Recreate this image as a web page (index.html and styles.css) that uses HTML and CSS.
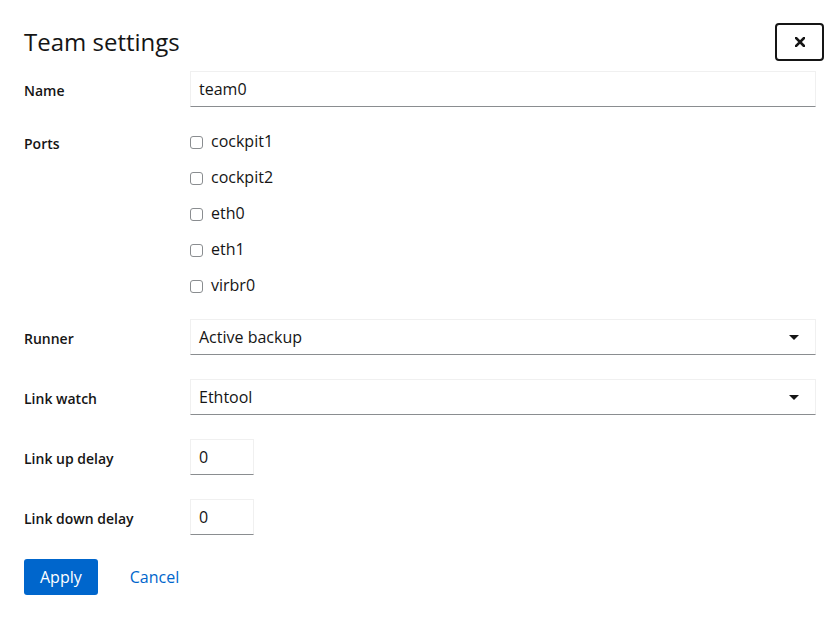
FILE: index.html
```html
<!DOCTYPE html>
<html lang="en">
<head>
<meta charset="utf-8">
<title>Team settings</title>
<link rel="stylesheet" href="styles.css">
</head>
<body>
<div class="dialog">
  <header class="dialog-header">
    <h1 class="dialog-title">Team settings</h1>
    <button class="close-btn" aria-label="Close">
      <svg width="10" height="10" viewBox="0 0 10 10"><path d="M1 1 L9 9 M9 1 L1 9" stroke="#151515" stroke-width="2.6" stroke-linecap="square"/></svg>
    </button>
  </header>
  <form class="form">
    <label class="form-label">Name</label>
    <div class="form-control"><div class="text-input">team0</div></div>

    <label class="form-label group-label">Ports</label>
    <div class="check-list">
      <label class="check"><span class="check-box"></span>cockpit1</label>
      <label class="check"><span class="check-box"></span>cockpit2</label>
      <label class="check"><span class="check-box"></span>eth0</label>
      <label class="check"><span class="check-box"></span>eth1</label>
      <label class="check"><span class="check-box"></span>virbr0</label>
    </div>

    <label class="form-label">Runner</label>
    <div class="form-control"><div class="select">Active backup<span class="caret"></span></div></div>

    <label class="form-label">Link watch</label>
    <div class="form-control"><div class="select">Ethtool<span class="caret"></span></div></div>

    <label class="form-label">Link up delay</label>
    <div class="form-control"><div class="text-input small">0</div></div>

    <label class="form-label">Link down delay</label>
    <div class="form-control"><div class="text-input small">0</div></div>
  </form>
  <footer class="actions">
    <button class="btn btn-primary">Apply</button>
    <button class="btn btn-link">Cancel</button>
  </footer>
</div>
</body>
</html>
```
FILE: styles.css
```css
* { box-sizing: border-box; }
html, body { margin: 0; padding: 0; background: #fff; }
body {
  font-family: "Open Sans", "Noto Sans", sans-serif;
  color: #151515;
  font-size: 16px;
}
.dialog {
  padding: 23px 16px 0 24px;
}
.dialog-header {
  display: flex;
  align-items: center;
  justify-content: space-between;
  height: 38px;
}
.dialog-title {
  margin: 0;
  font-size: 24px;
  font-weight: 400;
  line-height: 38px;
}
.close-btn {
  width: 49px;
  height: 38px;
  border: 2px solid #151515;
  border-radius: 4px;
  background: #fff;
  display: flex;
  align-items: center;
  justify-content: center;
  padding: 0;
}
.form {
  margin-top: 10px;
  margin-right: 8px;
  display: grid;
  grid-template-columns: 166px 1fr;
  row-gap: 24px;
}
.form-label {
  font-size: 14px;
  font-weight: 600;
  line-height: 21px;
  padding-top: 9px;
}
.form-label.group-label { padding-top: 2px; }
.text-input, .select {
  height: 36px;
  border: 1px solid #f0f0f0;
  border-bottom-color: #8a8d90;
  padding: 0 8px;
  line-height: 34px;
  font-size: 16px;
}
.text-input.small { width: 64px; }
.select {
  display: flex;
  align-items: center;
  justify-content: space-between;
  padding-right: 16px;
}
.caret {
  width: 0; height: 0;
  border-left: 5px solid transparent;
  border-right: 5px solid transparent;
  border-top: 5px solid #151515;
}
.check-list {
  display: flex;
  flex-direction: column;
  gap: 16px;
}
.check {
  display: flex;
  align-items: center;
  height: 20px;
  font-size: 16px;
}
.check-box {
  width: 13px;
  height: 13px;
  border: 1px solid #8a8d90;
  border-radius: 3px;
  margin-right: 8px;
  margin-top: 2px;
}
.actions {
  display: flex;
  gap: 16px;
  margin-top: 24px;
}
.btn {
  height: 36px;
  padding: 0 16px;
  font-family: inherit;
  font-size: 16px;
  border: none;
  border-radius: 3px;
  background: none;
}
.btn-primary { background: #0066cc; color: #fff; }
.btn-link { color: #0066cc; }
```
